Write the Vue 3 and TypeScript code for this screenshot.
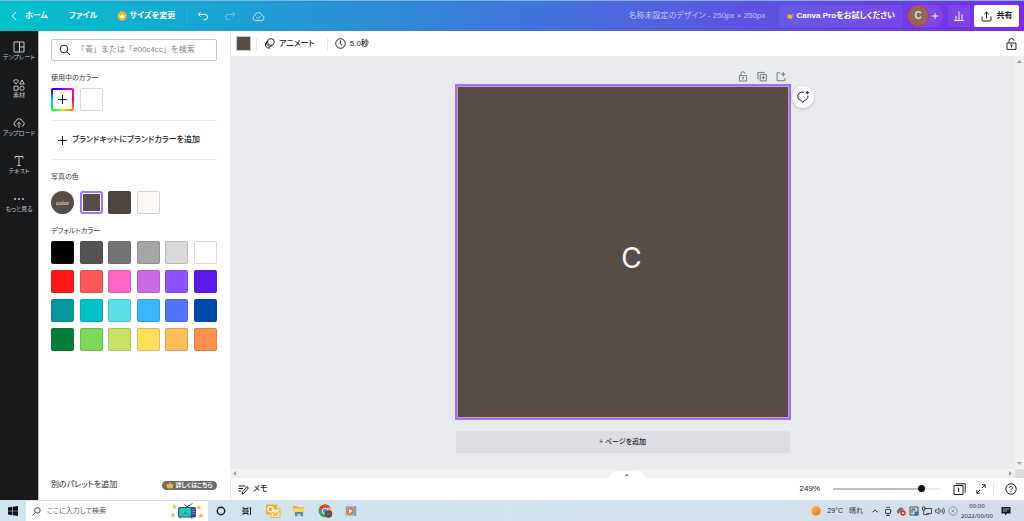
<script setup lang="ts">
import { ref, computed } from 'vue'

const query = ref('')
const zoom = ref(249)
const minZoom = 10
const maxZoom = 290
const zoomFill = computed(() => `${((zoom.value - minZoom) / (maxZoom - minZoom)) * 100}%`)

const photoColors = ['#584c47', '#504441', '#fbf7f5']
const defaultColors = [
  '#000000', '#545454', '#737373', '#a6a6a6', '#d9d9d9', '#ffffff',
  '#ff1616', '#ff5757', '#ff66c4', '#cb6ce6', '#8c52ff', '#5e17eb',
  '#03989e', '#00c2cb', '#5ce1e6', '#38b6ff', '#5271ff', '#004aad',
  '#008037', '#7ed957', '#c9e265', '#ffde59', '#ffbd59', '#ff914d',
]
</script>

<template>
  <div class="screen">
    <header class="topbar">
      <a href="#" class="home">
        <svg width="6" height="10" viewBox="0 0 6 10"><path d="M5 1 1.2 5 5 9" /></svg>
        <span>ホーム</span>
      </a>
      <button class="plain file">ファイル</button>
      <button class="plain resize">
        <svg width="10" height="10" viewBox="0 0 10 10">
          <circle cx="5" cy="5" r="4.7" fill="#fdb51b" stroke="none" />
          <path d="M2.3 3.8 3.7 4.7 5 2.8l1.3 1.9 1.4-.9-.7 3.3H3z" fill="#fff" stroke="none" />
        </svg>
        <span>サイズを変更</span>
      </button>
      <i class="top-rule"></i>
      <button class="plain undo" aria-label="元に戻す">
        <svg width="12" height="10" viewBox="0 0 12 10"><path d="M3.6 1 1.2 3.3l2.4 2.3M1.4 3.3h6.4a2.7 2.7 0 0 1 0 5.4H6.6" /></svg>
      </button>
      <button class="plain redo" aria-label="やり直す">
        <svg width="12" height="10" viewBox="0 0 12 10"><path d="M8.4 1l2.4 2.3-2.4 2.3M10.6 3.3H4.2a2.7 2.7 0 0 0 0 5.4h1.2" /></svg>
      </button>
      <button class="plain cloud" aria-label="保存済み">
        <svg width="13" height="11" viewBox="0 0 13 11"><path d="M3.3 9.6a2.6 2.6 0 0 1-.5-5A3.7 3.7 0 0 1 10 4.3a2.7 2.7 0 0 1-.4 5.3zM4.4 6.2l1.5 1.5 2.7-2.8" /></svg>
      </button>
      <span class="doc-title">名称未設定のデザイン - 250px × 250px</span>
      <button class="pro">
        <svg width="6" height="6" viewBox="0 0 6 6"><path d="M.2 1.2 1.7 2.4 3 .4l1.3 2 1.5-1.2-.6 4.3H.8z" fill="#fdb51b" stroke="none" /></svg>
        <span>Canva Proをお試しください</span>
      </button>
      <div class="members">
        <button class="avatar">C</button>
        <button class="plain add-member" aria-label="メンバーを追加">
          <svg width="8" height="8" viewBox="0 0 8 8"><path d="M4 1v6M1 4h6" /></svg>
        </button>
      </div>
      <button class="stats" aria-label="インサイト">
        <svg width="12" height="12" viewBox="0 0 12 12"><path d="M1 10.5h10M3 10.5V6M6 10.5V1.5M9 10.5V4.5" /></svg>
      </button>
      <button class="share">
        <svg width="11" height="11" viewBox="0 0 11 11"><path d="M5.5 7.5V1M3.2 3.2 5.5 1l2.3 2.2M1 5.5V9q0 1 1 1h7q1 0 1-1V5.5" /></svg>
        <span>共有</span>
      </button>
    </header>

    <div class="workspace">
      <nav class="rail">
        <button>
          <svg width="12" height="12" viewBox="0 0 12 12"><path d="M1 1h10v10H1zM6.5 1v10M6.5 6H11" /></svg>
          <span>テンプレート</span>
        </button>
        <button>
          <svg width="12" height="12" viewBox="0 0 12 12"><path d="M3 5 .9 2.7a1.2 1.2 0 0 1 2.1-1.3 1.2 1.2 0 0 1 2.1 1.3zM9 1l2.3 4H6.7zM1 7.2h4v4H1z" /><circle cx="9" cy="9.2" r="2.1" /></svg>
          <span>素材</span>
        </button>
        <button>
          <svg width="12" height="12" viewBox="0 0 12 12"><path d="M3.4 9.2a2.5 2.5 0 0 1-.6-4.9 3.4 3.4 0 0 1 6.6 0 2.5 2.5 0 0 1-.6 4.9M6 11V5.5M4.2 7.2 6 5.4l1.8 1.8" /></svg>
          <span>アップロード</span>
        </button>
        <button>
          <svg width="12" height="12" viewBox="0 0 12 12"><path d="M2 3.5V1.5h8v2M6 1.5v9M4.3 10.5h3.4" /></svg>
          <span>テキスト</span>
        </button>
        <button>
          <svg width="12" height="12" viewBox="0 0 12 12"><g fill="#c9cacc" stroke="none"><circle cx="2" cy="6" r="1" /><circle cx="6" cy="6" r="1" /><circle cx="10" cy="6" r="1" /></g></svg>
          <span>もっと見る</span>
        </button>
      </nav>

      <aside class="panel">
        <label class="search">
          <svg width="12" height="12" viewBox="0 0 12 12"><circle cx="5" cy="5" r="3.8" /><path d="M7.8 7.8 11 11" /></svg>
          <input v-model="query" type="text" aria-label="色を検索" placeholder="「青」または「#00c4cc」を検索" />
        </label>

        <h2>使用中のカラー</h2>
        <div class="swatches used">
          <button class="swatch rainbow" aria-label="新しいカラーを追加">
            <svg width="9" height="9" viewBox="0 0 9 9"><path d="M4.5 0v9M0 4.5h9" /></svg>
          </button>
          <button class="swatch blank" aria-label="#ffffff"></button>
        </div>

        <button class="brand">
          <svg width="9" height="9" viewBox="0 0 9 9"><path d="M4.5 0v9M0 4.5h9" /></svg>
          <span>ブランドキットにブランドカラーを追加</span>
        </button>

        <h2 class="photo-title">写真の色</h2>
        <div class="swatches photo">
          <button class="swatch logo">color</button>
          <button
            v-for="(c, i) in photoColors"
            :key="c"
            class="swatch"
            :class="{ selected: i === 0 }"
            :style="{ backgroundColor: c }"
            :aria-label="c"
          ></button>
        </div>

        <h2>デフォルトカラー</h2>
        <div class="swatches">
          <button v-for="c in defaultColors" :key="c" class="swatch" :style="{ backgroundColor: c }" :aria-label="c"></button>
        </div>

        <div class="panel-foot">
          <button class="plain">別のパレットを追加</button>
          <button class="more">
            <svg width="8" height="8" viewBox="0 0 10 10"><path d="M.5 3 3 4.3 5 1l2 3.3L9.5 3l-1 6h-7z" fill="#f5b72d" stroke="none" /></svg>
            <span>詳しくはこちら</span>
          </button>
        </div>
      </aside>

      <main class="editor">
        <div class="toolbar">
          <button class="current" aria-label="背景色"></button>
          <i class="rule"></i>
          <button class="plain tool">
            <svg width="11" height="11" viewBox="0 0 11 11"><circle cx="6.9" cy="4" r="3.4" /><path d="M3.1 2.9a3.5 3.5 0 0 0 4.7 5M1.7 5a3.5 3.5 0 0 0 4.3 4.9" /></svg>
            <span>アニメート</span>
          </button>
          <i class="rule"></i>
          <button class="plain tool">
            <svg width="11" height="11" viewBox="0 0 11 11"><circle cx="5.5" cy="5.5" r="4.8" /><path d="M5.3 2.5v3.2l2 1.8" /></svg>
            <span>5.0秒</span>
          </button>
          <button class="plain lock" aria-label="ロック">
            <svg width="11" height="12" viewBox="0 0 11 12"><path d="M1 5h9v6.4H1zM3 5V3.3a2.5 2.5 0 0 1 5-.5M5.5 9.6V7M4.3 7h2.4" /></svg>
          </button>
        </div>

        <div class="stage-row">
          <div class="stage">
            <div class="page">
              <div class="page-tools">
                <button class="plain" aria-label="ページをロック">
                  <svg width="10" height="11" viewBox="0 0 11 12"><path d="M1.5 5h8v6h-8zM3.2 5V3.3a2.3 2.3 0 0 1 4.6-.4M5.5 9.4V7M4.5 7h2" /></svg>
                </button>
                <button class="plain" aria-label="ページを複製">
                  <svg width="10" height="11" viewBox="0 0 11 12"><path d="M3.5 4h6.8v6.8H3.5zM7 5.6v3.6M5.1 7.4h3.7M2 8.5H1V1.5h7v1" /></svg>
                </button>
                <button class="plain" aria-label="ページを追加">
                  <svg width="10" height="11" viewBox="0 0 11 12"><path d="M4.5 2H1.2v8.7h8.6V7.5M8 1v5M5.5 3.5h5" /></svg>
                </button>
              </div>
              <div class="artboard">
                <span>C</span>
                <button class="comment" aria-label="コメントを追加">
                  <svg width="14" height="14" viewBox="0 0 14 14"><path d="M8 2.2H5.6a4.1 4.1 0 0 0-1.400 7.900l1 .3L6.800 12.600l1.500-2.200a4.100 4.100 0 0 0 3.600-4.600M11.300.8v3.600M9.500 2.600h3.600" /></svg>
                </button>
              </div>
              <button class="add-page">+ ページを追加</button>
            </div>
          </div>
          <div class="vscroll">
            <svg width="5" height="3" viewBox="0 0 5 3"><path d="M0 3 2.5 0 5 3z" /></svg>
            <svg width="5" height="3" viewBox="0 0 5 3"><path d="M0 0l2.5 3L5 0z" /></svg>
          </div>
        </div>
        <div class="hscroll">
          <svg width="3" height="5" viewBox="0 0 3 5"><path d="M3 0 0 2.5 3 5z" /></svg>
          <svg width="3" height="5" viewBox="0 0 3 5"><path d="M0 0l3 2.5L0 5z" /></svg>
          <i class="corner"></i>
          <button class="tab" aria-label="ページ一覧を表示">
            <svg width="42" height="7" viewBox="0 0 42 7"><path d="M0 7C5 7 5 0 11 0h20c6 0 6 7 11 7z" fill="#fff" /><path d="M19.3 5.2 21 3.5l1.7 1.7" fill="none" stroke="#333" /></svg>
          </button>
        </div>

        <div class="status">
          <button class="plain tool">
            <svg width="11" height="11" viewBox="0 0 11 11"><path d="M.5 2h7M.5 4.5h4.5M.5 7H3M4 10l.6-2.2L9 2.6l1.4 1.2L6 9.2z" /></svg>
            <span>メモ</span>
          </button>
          <output class="zoom">{{ zoom }}%</output>
          <input
            v-model.number="zoom"
            type="range"
            :min="minZoom"
            :max="maxZoom"
            aria-label="ズーム"
            :style="{ '--fill': zoomFill }"
          />
          <button class="plain pages" aria-label="グリッドビュー">
            <svg width="13" height="12" viewBox="0 0 13 12"><path d="M1 2.5h9v9H1zM2.8.8h9.4v8.8" /><path d="M4.7 5.7l1-.7v4" /></svg>
          </button>
          <button class="plain expand" aria-label="全画面表示">
            <svg width="10" height="10" viewBox="0 0 10 10"><path d="M6 4l3-3M6.2.8h3v3M4 6 1 9M.8 6.2v3h3" /></svg>
          </button>
          <i class="rule"></i>
          <button class="plain help" aria-label="ヘルプ">
            <svg width="12" height="12" viewBox="0 0 12 12"><circle cx="6" cy="6" r="5.2" /><path d="M4.5 4.8a1.5 1.5 0 1 1 2.2 1.3q-.7.4-.7 1.1M6 8.2v1" /></svg>
          </button>
        </div>
      </main>
    </div>

    <footer class="taskbar">
      <button class="plain start" aria-label="スタート">
        <svg width="10" height="10" viewBox="0 0 10 10"><path d="M0 1.4 4.4.8v3.9H0zM5 .7 10 0v4.7H5zM0 5.3h4.4v3.9L0 8.6zM5 5.3h5V10l-5-.7z" fill="#0b0d10" stroke="none" /></svg>
      </button>
      <label class="os-search">
        <svg width="9" height="9" viewBox="0 0 9 9"><circle cx="5.4" cy="3.4" r="2.8" /><path d="M3.4 5.4.6 8.3" /></svg>
        <input type="text" aria-label="検索" placeholder="ここに入力して検索" />
        <svg class="tv" width="34" height="17" viewBox="0 0 34 17">
          <g fill="#f9bd38" stroke="none">
            <path d="M4.5 1l.8 1.7 1.7.3-1.3 1.2.3 1.8-1.5-.9-1.5.9.3-1.8L2 3l1.7-.3z" />
            <path d="M3 9.5l.8 1.7 1.7.3-1.3 1.2.3 1.8-1.5-.9-1.5.9.3-1.8L.5 11.500l1.700-.300z" />
            <path d="M29 2l.8 1.7 1.7.3-1.3 1.2.3 1.8-1.5-.9-1.5.9.3-1.8L26.5 4l1.7-.3z" />
            <path d="M31 10l.8 1.700 1.700.3-1.300 1.200.3 1.800-1.500-.9-1.500.9.3-1.800L28.500 12l1.700-.3z" />
          </g>
          <path d="M14 .8l3 3.200L22.500.5" stroke="#555" />
          <path d="M10 15.500l1-1.500M22 15.500l-1-1.500" stroke="#444" />
          <rect x="8" y="4" width="18" height="10.500" rx="1.500" fill="#35507c" stroke="none" />
          <rect x="9" y="5" width="12" height="8.500" rx="1.500" fill="#19c9bd" stroke="none" />
          <path d="M13 11l2-3 2.500 3z" fill="#0d8f9a" stroke="none" />
          <path d="M22.500 6.500h2M22.500 8.500h2M22.500 10.500h2" stroke="#98a9c8" />
        </svg>
      </label>
      <div class="apps">
        <button class="plain" aria-label="Cortana">
          <svg width="16" height="16" viewBox="0 0 16 16"><circle cx="8" cy="8" r="3.7" stroke="#17191c" stroke-width="1.4" /></svg>
        </button>
        <button class="plain" aria-label="タスクビュー">
          <svg width="16" height="16" viewBox="0 0 16 16"><path d="M4 4v1.500h5V4M4 12v-1.500h5V12M4 7h5v2H4zM11.500 4v8M10.700 6h1.600" stroke="#26292c" /></svg>
        </button>
        <button class="plain" aria-label="Outlook">
          <svg width="16" height="16" viewBox="0 0 16 16"><rect x="1" y="1.500" width="11" height="10" fill="#f2a93a" stroke="none" /><rect x="6" y="6" width="9" height="8.500" fill="#fde7a8" stroke="#e8a72e" stroke-width=".7" /><path d="M6 8l4.500 3L15 8M8 12h5" stroke="#d99a20" stroke-width=".8" /><circle cx="5.500" cy="6.200" r="2.600" stroke="#fff" stroke-width="1.200" /></svg>
        </button>
        <button class="plain" aria-label="エクスプローラー">
          <svg width="16" height="16" viewBox="0 0 16 16"><path d="M2 3h4l1 1.300h6V13H2z" fill="#e8ae36" stroke="none" /><path d="M2 5.500h11.500V13H2z" fill="#fcd462" stroke="none" /><path d="M4 9h8v4.200h-2.500V11h-3v2.200H4z" fill="#3c96dc" stroke="none" /></svg>
        </button>
        <button class="plain" aria-label="Chrome">
          <svg width="16" height="16" viewBox="0 0 16 16"><circle cx="8" cy="8" r="6.500" fill="#34a853" stroke="none" /><path d="M2.400 4.700A6.500 6.500 0 0 1 13.700 4.800H8L5.200 9.600z" fill="#e43e32" stroke="none" /><path d="M13.700 4.800A6.500 6.500 0 0 1 8 14.500l2.800-4.900L10 4.800z" fill="#fbc116" stroke="none" /><circle cx="8" cy="8" r="2.800" fill="#4285f4" stroke="#fff" stroke-width=".9" /><circle cx="11.500" cy="11" r="3.700" fill="#574b48" stroke="none" /><path d="M9.500 11h4" stroke="#9c8f89" stroke-width=".8" /></svg>
        </button>
        <button class="plain" aria-label="メディアプレーヤー">
          <svg width="16" height="16" viewBox="0 0 16 16"><rect x="2.500" y="3" width="11" height="10" fill="#8fbde8" stroke="none" /><path d="M12 3v10" stroke="#4a88c8" /><circle cx="7.200" cy="8" r="4" fill="#ee7b22" stroke="none" /><path d="M6 5.800v4.400L9.600 8z" fill="#fff" stroke="none" /></svg>
        </button>
      </div>
      <div class="tray">
        <svg class="sun" width="10" height="10" viewBox="0 0 10 10"><defs><linearGradient id="sunFill" x1="0" y1="0" x2="1" y2="1"><stop offset="0" stop-color="#fcb72a" /><stop offset="1" stop-color="#ee7a1c" /></linearGradient></defs><circle cx="5" cy="5" r="4.7" fill="url(#sunFill)" stroke="none" /></svg>
        <span class="temp">29°C</span>
        <span class="weather">晴れ</span>
        <div class="tray-icons">
          <svg width="10" height="10" viewBox="0 0 10 10"><path d="M2.500 6.300 5 3.800l2.500 2.500" /></svg>
          <svg width="10" height="10" viewBox="0 0 10 10"><path d="M2.500 3.500h5v4h-5zM3 1.500h4M5 7.500v2M3 9.500h4M7.500 5h1.300" stroke-width=".8" /></svg>
          <svg width="10" height="10" viewBox="0 0 10 10"><path d="M2.500 7.500A2 2 0 0 1 2.300 4 2.700 2.700 0 0 1 7.300 3.500" fill="#777" stroke="#666" /><circle cx="7" cy="7" r="2.700" fill="#e0322c" stroke="none" /><path d="M6 6l2 2M8 6 6 8" stroke="#fff" stroke-width=".7" /></svg>
          <svg width="10" height="10" viewBox="0 0 10 10"><path d="M1 1h8v8H1zM3 3h3M3 3v4M4.500 5l2-1.500" stroke-width=".8" /><rect x="5.500" y="5.500" width="4" height="4" fill="#2374c5" stroke="none" /></svg>
          <svg width="10" height="10" viewBox="0 0 10 10"><path d="M2.500 2.500h7v5h-5M.5 1h2.500v3H.5zM1.700 4v4.500h5" stroke-width=".8" /></svg>
          <svg width="10" height="10" viewBox="0 0 10 10"><path d="M.5 3.800h1.600L4 2v6L2.100 6.200H.5zM5.500 3.700q1 1.300 0 2.600M7 2.700q1.700 2.300 0 4.600M8.400 1.700q2.400 3.300 0 6.600" stroke-width=".7" /></svg>
          <svg width="10" height="10" viewBox="0 0 10 10"><circle cx="5" cy="5" r="4.200" stroke="#8f949c" /><path d="M3.500 3.500l3 3M6.500 3.500l-3 3" stroke="#8f949c" /></svg>
        </div>
        <div class="clock"><span>00:00</span><span>2022/00/00</span></div>
        <button class="plain notice" aria-label="通知">
          <svg width="10" height="10" viewBox="0 0 10 10"><path d="M.5 1h9v6.500H6L4 9.500v-2H.5z" fill="#17191d" stroke="none" /><path d="M2 3h6M2 5h4" stroke="#cfd5e0" stroke-width=".8" /></svg>
        </button>
      </div>
    </footer>
  </div>
</template>

<style>
html,
body {
  margin: 0;
  background: #fff;
}
</style>

<style scoped>
.screen {
  display: flex;
  flex-direction: column;
  height: 100vh;
  overflow: hidden;
  color: #1c2026;
  font: 8px/10px "Liberation Sans", "Noto Sans CJK JP", sans-serif;
  font-feature-settings: "palt";
}
.screen * {
  box-sizing: border-box;
}
button,
input {
  margin: 0;
  padding: 0;
  border: 0;
  color: inherit;
  font: inherit;
  font-feature-settings: inherit;
  background: none;
  white-space: nowrap;
}
button {
  cursor: pointer;
}
a {
  color: inherit;
  text-decoration: none;
}
svg {
  display: block;
  flex: none;
  fill: none;
  stroke: currentColor;
}
.plain {
  display: flex;
  align-items: center;
}

/* top bar */
.topbar {
  display: flex;
  align-items: center;
  flex: none;
  height: 31px;
  padding: 0 5px 0 11px;
  border-top: 1px solid #7fb6dc;
  color: #fff;
  font-weight: 700;
  background: linear-gradient(90deg, #00c4cc, #7d2ae8);
}
.home {
  display: flex;
  align-items: center;
  gap: 8px;
}
.file {
  margin-left: 21px;
}
.resize {
  gap: 2px;
  margin-left: 20px;
}
.top-rule {
  width: 1px;
  height: 14px;
  margin: 0 9px 0 12px;
  background: rgba(255, 255, 255, 0.1);
}
.redo {
  margin-left: 15px;
  opacity: 0.4;
}
.cloud {
  margin-left: 16px;
  opacity: 0.75;
}
.doc-title {
  margin-left: auto;
  color: rgba(255, 255, 255, 0.65);
  font-weight: 400;
}
.pro {
  display: flex;
  align-items: center;
  justify-content: center;
  gap: 3px;
  height: 22px;
  margin-left: 14px;
  padding: 0 8px;
  border-radius: 2px;
  background: rgba(255, 255, 255, 0.06);
}
.members {
  display: flex;
  align-items: center;
  margin-left: 4px;
  padding-right: 4px;
  border-radius: 11px;
  background: rgba(255, 255, 255, 0.08);
}
.avatar {
  width: 22px;
  height: 22px;
  border: 1px solid #d92550;
  border-radius: 50%;
  color: #e8dfd8;
  font-size: 10px;
  background: #8b6a5a;
}
.add-member {
  margin-left: 2px;
}
.stats {
  display: grid;
  place-items: center;
  width: 22px;
  height: 22px;
  margin-left: 5px;
  border-radius: 2px;
  background: rgba(255, 255, 255, 0.08);
}
.share {
  display: flex;
  align-items: center;
  justify-content: center;
  gap: 5px;
  width: 45px;
  height: 22px;
  margin-left: 4px;
  border-radius: 2px;
  color: #1c2026;
  background: #fff;
}

/* workspace */
.workspace {
  display: flex;
  flex: 1;
  min-height: 0;
}
.rail {
  display: flex;
  flex-direction: column;
  flex: none;
  width: 38px;
  padding-top: 1px;
  color: #c9cacc;
  background: #18191b;
}
.rail button {
  display: flex;
  flex-direction: column;
  align-items: center;
  justify-content: center;
  height: 38px;
  font-size: 6px;
  line-height: 8px;
}
.panel {
  display: flex;
  flex-direction: column;
  flex: none;
  width: 192px;
  padding: 8px 13px 0 12px;
  border-left: 1px solid #b9babc;
  background: #fff;
}
.search {
  display: flex;
  align-items: center;
  gap: 6px;
  flex: none;
  height: 22px;
  padding: 0 7px;
  border: 1px solid #c6c9cd;
  border-radius: 2px;
}
.search input,
.os-search input {
  flex: 1;
  min-width: 0;
  outline: 0;
}
.search input {
  font-feature-settings: normal;
}
.search input::placeholder {
  color: #80858b;
  opacity: 1;
}
h2 {
  margin: 12px 0 5px;
  color: #33373d;
  font-size: 7px;
  font-weight: 400;
  line-height: 10px;
}
.photo-title {
  margin-bottom: 9px;
}
.swatches {
  display: grid;
  grid-template-columns: repeat(6, 23px);
  justify-content: space-between;
  row-gap: 6px;
}
.swatch {
  display: grid;
  place-items: center;
  height: 23px;
  border: 1px solid rgba(60, 60, 60, 0.2);
  border-radius: 2px;
}
.blank {
  background: #fff;
}
.rainbow {
  border: 2px solid transparent;
  background:
    linear-gradient(#fff, #fff) padding-box,
    conic-gradient(#80f, #f0c 45deg, #f04 90deg, #f80 135deg, #de0 180deg, #0f3 220deg, #0cf 270deg, #00f 315deg, #80f) border-box;
}
.logo {
  border: 0;
  border-radius: 50%;
  color: #f1ebe8;
  font-size: 6px;
  background: #584c47;
}
.selected {
  border: 2px solid #a370ff;
  border-radius: 3px;
  box-shadow: inset 0 0 0 1px #fff;
}
.brand {
  display: flex;
  align-items: center;
  gap: 5px;
  flex: none;
  height: 40px;
  margin-top: 9px;
  padding-left: 7px;
  border: solid #e6e8ea;
  border-width: 1px 0;
  font-weight: 500;
}
.panel-foot {
  display: flex;
  align-items: center;
  justify-content: space-between;
  height: 30px;
  margin-top: auto;
}
.more {
  display: flex;
  align-items: center;
  justify-content: center;
  gap: 1px;
  width: 55px;
  height: 9px;
  border-radius: 5px;
  color: #fff;
  font-size: 6px;
  font-weight: 700;
  line-height: 9px;
  background: #6b6c6f;
}

/* editor */
.editor {
  display: flex;
  flex-direction: column;
  flex: 1;
  min-width: 0;
}
.toolbar {
  display: flex;
  align-items: center;
  flex: none;
  height: 25px;
  padding: 0 7px 0 5px;
  border-left: 1px solid #e6e8eb;
  font-weight: 500;
}
.current {
  width: 15px;
  height: 15px;
  border: 1px solid #c9c9c9;
  background: #584c47;
}
.rule {
  width: 1px;
  height: 12px;
  background: #e3e5e8;
}
.tool {
  gap: 4px;
}
.toolbar .tool {
  margin-left: 7px;
}
.current + .rule {
  margin-left: 5px;
}
.tool + .rule {
  margin-left: 12px;
}
.lock {
  margin-left: auto;
}
.stage-row {
  display: flex;
  flex: 1;
  min-height: 0;
  background: #e9eaee;
}
.stage {
  display: flex;
  justify-content: center;
  flex: 1;
  min-width: 0;
  padding-top: 14px;
}
.page {
  display: flex;
  flex-direction: column;
  width: 336px;
  max-width: 90%;
}
.page-tools {
  display: flex;
  justify-content: flex-end;
  gap: 9px;
  height: 14px;
  padding-right: 5px;
  color: #6a6e75;
}
.page-tools .plain {
  height: 12px;
}
.artboard {
  position: relative;
  display: grid;
  place-items: center;
  flex: none;
  aspect-ratio: 1;
  padding: 12px 0 0 18px;
  border: 2px solid #a46bff;
  color: #fff;
  font-family: Inter, sans-serif;
  font-size: 28px;
  line-height: 32px;
  background: #584c47;
  box-shadow: inset 0 0 0 1px #b5aaa8;
}
.comment {
  position: absolute;
  top: 0;
  left: 100%;
  display: grid;
  place-items: center;
  width: 22px;
  height: 22px;
  margin-left: 3px;
  border-radius: 50%;
  color: #1c2026;
  background: #fff;
  box-shadow: 0 1px 3px rgba(40, 45, 60, 0.25);
}
.add-page {
  flex: none;
  height: 22px;
  margin: 11px 1px 0;
  border-radius: 2px;
  font-size: 7px;
  font-weight: 500;
  background: #dddee3;
}
.vscroll {
  display: flex;
  flex-direction: column;
  align-items: center;
  justify-content: space-between;
  width: 9px;
  padding: 4px 0;
  background: #f0f0f1;
}
.vscroll svg,
.hscroll > svg {
  fill: #9b9da1;
  stroke: none;
}
.hscroll {
  position: relative;
  display: flex;
  align-items: center;
  gap: 3px;
  flex: none;
  height: 9px;
  padding-left: 3px;
  background: #f0f0f1;
}
.hscroll > svg:nth-of-type(2) {
  margin-left: auto;
}
.corner {
  width: 9px;
  height: 9px;
  background: #dcdcdd;
}
.tab {
  position: absolute;
  bottom: 0;
  left: 50%;
  margin-left: -21px;
}
.tab svg {
  stroke: none;
}
.status {
  display: flex;
  align-items: center;
  flex: none;
  height: 22px;
  padding: 0 7px;
  border-left: 1px solid #e6e8eb;
  font-weight: 500;
}
.zoom {
  margin-left: auto;
}
.status input {
  width: 107px;
  height: 10px;
  margin: 0 13px;
  appearance: none;
}
.status input::-webkit-slider-runnable-track {
  height: 2px;
  border-radius: 1px;
  background: linear-gradient(#bcc0c6, #bcc0c6) 0 0 / var(--fill) 100% no-repeat #e6e8eb;
}
.status input::-webkit-slider-thumb {
  width: 7px;
  height: 7px;
  margin-top: -3px;
  border-radius: 50%;
  appearance: none;
  background: #0e1318;
}
.expand {
  margin: 0 7px 0 10px;
}
.help {
  margin-left: 11px;
}

/* desktop task bar */
.taskbar {
  display: flex;
  align-items: stretch;
  flex: none;
  height: 21px;
  border-top: 1px solid #d8e2e8;
  background: linear-gradient(90deg, #cfe5ee, #d0e3ee 50%, #d5dcec);
}
.start {
  justify-content: center;
  width: 26px;
}
.os-search {
  display: flex;
  align-items: center;
  gap: 6px;
  width: 182px;
  padding: 0 4px 0 6px;
  color: #3c4045;
  font-size: 7px;
  background: #fff;
}
.os-search input::placeholder {
  color: #55595e;
  opacity: 1;
}
.apps {
  display: flex;
  gap: 10px;
  margin-left: 5px;
}
.tray {
  display: flex;
  align-items: center;
  margin-left: auto;
  padding-right: 13px;
  color: #24282e;
  font-size: 7px;
}
.sun + .temp {
  margin-left: 6px;
}
.weather {
  margin-left: 6px;
}
.tray-icons {
  display: flex;
  gap: 3px;
  margin-left: 7px;
}
.clock {
  display: flex;
  flex-direction: column;
  align-items: center;
  width: 38px;
  font-family: "Noto Sans", sans-serif;
  font-size: 6px;
}
.notice {
  margin-left: 5px;
}
</style>
